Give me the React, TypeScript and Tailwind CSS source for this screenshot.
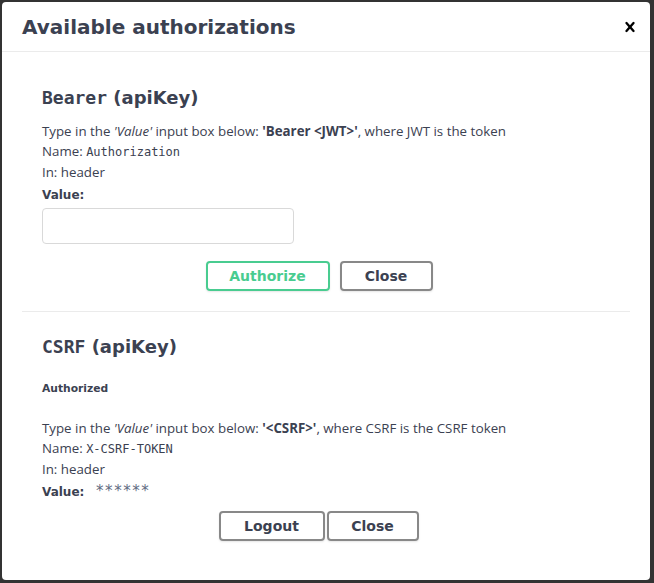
import React from "react";

function Heading({ name }: { name: string }) {
  return (
    <h4 className="text-[18px] leading-[22px] font-bold text-[#3b4151]">
      <code className="font-['DejaVu_Sans_Mono',monospace]">{name}</code>
      {"\u00a0(apiKey)"}
    </h4>
  );
}

function Btn({ children, className }: { children: React.ReactNode; className: string }) {
  return (
    <button
      className={
        "h-[30px] rounded-[4px] border-2 text-[14px] font-bold leading-none shadow-[0_1px_2px_rgba(0,0,0,0.1)] bg-transparent " +
        className
      }
    >
      {children}
    </button>
  );
}

export default function App() {
  return (
    <div className="w-[654px] h-[583px] bg-[#333333] pt-[2px] pl-[2px]">
      <div className="w-[648px] h-[578px] bg-white rounded-[4px] flex flex-col text-[#3b4151] font-['DejaVu_Sans',sans-serif]">
        <div className="h-[50px] shrink-0 border-b border-[#ebebeb] flex items-center justify-between pl-[20px] pr-[10px]">
          <h3 className="text-[20px] font-bold leading-none">Available authorizations</h3>
          <button className="w-[20px] h-[20px] flex items-center justify-center">
            <svg width="20" height="20" viewBox="0 0 20 20">
              <path
                fill="#000"
                d="M14.348 14.849a1.2 1.2 0 0 1-1.697 0L10 11.819l-2.651 3.029a1.2 1.2 0 1 1-1.697-1.697l2.758-3.15-2.759-3.152a1.2 1.2 0 1 1 1.697-1.697L10 8.183l2.651-3.031a1.2 1.2 0 1 1 1.697 1.697l-2.758 3.152 2.758 3.15a1.2 1.2 0 0 1 0 1.698z"
              />
            </svg>
          </button>
        </div>

        <div className="px-[20px]">
          {/* Bearer */}
          <div className="px-[20px] pt-[35px] pb-[20px] border-b border-[#ebebeb]">
            <Heading name="Bearer" />
            <div className="mt-[12px] text-[13.3px] leading-[20px] font-['Open_Sans',sans-serif]">
              <p>
                Type in the <em>'Value'</em> input box below: <strong>'Bearer &lt;JWT&gt;'</strong>, where JWT is the token
              </p>
              <p>
                Name: <code className="font-['DejaVu_Sans_Mono',monospace] text-[12px]">Authorization</code>
              </p>
              <p>In: header</p>
            </div>
            <label className="mt-[3px] block text-[12px] leading-[20px] font-bold">Value:</label>
            <input className="mt-[3px] block w-[252px] h-[36px] border border-[#d9d9d9] rounded-[4px] bg-white" />
            <div className="mt-[17px] flex justify-center gap-[10px] pr-[14px]">
              <Btn className="w-[124px] border-[#49cc90] text-[#49cc90]">Authorize</Btn>
              <Btn className="w-[93px] border-[#888888] text-[#3b4151]">Close</Btn>
            </div>
          </div>

          {/* CSRF */}
          <div className="px-[20px] pt-[24px]">
            <Heading name="CSRF" />
            <h6 className="mt-[23px] text-[10.72px] leading-[16px] font-bold">Authorized</h6>
            <div className="mt-[21px] text-[13.3px] leading-[20px] font-['Open_Sans',sans-serif]">
              <p>
                Type in the <em>'Value'</em> input box below: <strong>'&lt;CSRF&gt;'</strong>, where CSRF is the CSRF token
              </p>
              <p>
                Name: <code className="font-['DejaVu_Sans_Mono',monospace] text-[12px]">X-CSRF-TOKEN</code>
              </p>
              <p>In: header</p>
            </div>
            <div className="mt-[3px] flex items-center h-[20px]">
              <label className="text-[12px] leading-[20px] font-bold">Value:</label>
              <code className="ml-[11px] font-['DejaVu_Sans_Mono',monospace] text-[15px] leading-[20px] text-[#5f6b82] -mt-[3px]">
                ******
              </code>
            </div>
            <div className="mt-[9px] flex justify-center gap-[2px] pr-[15px]">
              <Btn className="w-[106px] border-[#888888] text-[#3b4151]">Logout</Btn>
              <Btn className="w-[92px] border-[#888888] text-[#3b4151]">Close</Btn>
            </div>
          </div>
        </div>
      </div>
    </div>
  );
}
